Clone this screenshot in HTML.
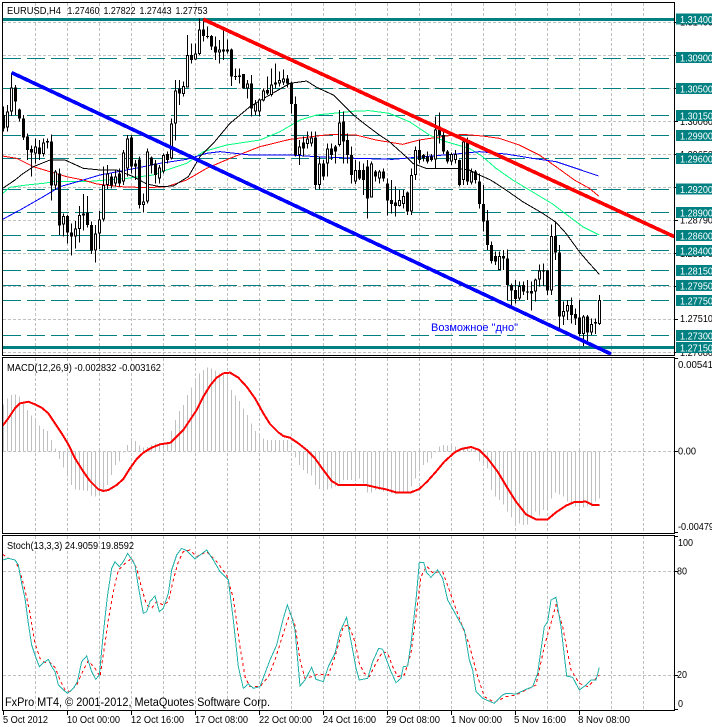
<!DOCTYPE html>
<html><head><meta charset="utf-8"><title>EURUSD,H4</title>
<style>
html,body{margin:0;padding:0;background:#fff;width:712px;height:727px;overflow:hidden}
svg{display:block;shape-rendering:crispEdges;font-family:"Liberation Sans",sans-serif;font-size:10px}
text{fill:#000}
.ax{font-size:10.5px}
.w{fill:#fff}
</style></head><body>
<svg width="712" height="727" viewBox="0 0 712 727" xmlns="http://www.w3.org/2000/svg">
<rect width="712" height="727" fill="#fff"/>
<!-- grid -->
<g fill="none" stroke="#c0c0c0" stroke-width="1" stroke-dasharray="3 2">
<path d="M35.5 3V355M67.5 3V355M99.5 3V355M131.5 3V355M163.5 3V355M195.5 3V355M227.5 3V355M259.5 3V355M291.5 3V355M323.5 3V355M355.5 3V355M387.5 3V355M419.5 3V355M451.5 3V355M483.5 3V355M515.5 3V355M547.5 3V355M579.5 3V355M611.5 3V355M643.5 3V355"/>
<path d="M35.5 358V533M67.5 358V533M99.5 358V533M131.5 358V533M163.5 358V533M195.5 358V533M227.5 358V533M259.5 358V533M291.5 358V533M323.5 358V533M355.5 358V533M387.5 358V533M419.5 358V533M451.5 358V533M483.5 358V533M515.5 358V533M547.5 358V533M579.5 358V533M611.5 358V533M643.5 358V533"/>
<path d="M35.5 536V710M67.5 536V710M99.5 536V710M131.5 536V710M163.5 536V710M195.5 536V710M227.5 536V710M259.5 536V710M291.5 536V710M323.5 536V710M355.5 536V710M387.5 536V710M419.5 536V710M451.5 536V710M483.5 536V710M515.5 536V710M547.5 536V710M579.5 536V710M611.5 536V710M643.5 536V710"/>
<path d="M3 22.5H674M3 55.5H674M3 88.5H674M3 121.5H674M3 154.5H674M3 187.5H674M3 220.5H674M3 253.5H674M3 286.5H674M3 319.5H674M3 352.5H674M3 451.5H674M3 571.5H674M3 675.5H674"/>
</g>
<!-- teal levels -->
<g fill="none" stroke="#008080" stroke-width="1" stroke-dasharray="18 6">
<path d="M3 58.5H674M3 88.5H674M3 115.5H674M3 135.5H674M3 158.5H674M3 189.5H674M3 212.5H674M3 235.5H674M3 250.5H674M3 270.5H674M3 285.5H674M3 300.5H674M3 335.5H674"/>
</g>
<path d="M3 19.5H674M3 347.5H674" stroke="#008080" stroke-width="3" fill="none"/>

<!-- main chart in 3x coordinates -->
<g transform="scale(.333333)" fill="none">
<path stroke="#00ff7f" stroke-width="3" d="M8 580L30 562 80 555 130 550 160 545 260 545 320 540 380 535 460 525 500 510 560 490 610 455 680 435 780 420 840 395 900 360 950 345 1068 333 1108 332 1168 340 1228 365 1288 405 1338 425 1408 445 1448 470 1488 505 1538 540 1588 570 1658 612 1688 635 1748 680 1798 705"/>
<path stroke="#ff0000" stroke-width="3" d="M8 468L50 475 100 500 200 530 250 540 290 552 360 560 440 563 500 560 560 540 620 505 690 475 780 440 870 418 950 408 1000 403 1068 405 1128 420 1208 433 1258 420 1338 408 1388 403 1448 408 1498 415 1558 435 1618 465 1668 500 1723 540 1768 565 1796 588"/>
<path stroke="#0000ff" stroke-width="3" d="M8 658L60 630 130 590 180 560 250 540 300 525 380 510 480 490 560 478 620 460 660 455 750 465 870 465 950 470 1068 475 1178 478 1248 472 1368 462 1438 455 1518 462 1598 475 1668 485 1728 505 1796 528"/>
<path stroke="#000" stroke-width="3" d="M8 565L45 540 70 520 100 500 150 480 195 480 250 505 300 510 350 510 400 530 440 552 480 560 520 558 565 530 600 470 640 430 690 370 750 320 800 290 870 250 920 243 950 262 1000 285 1060 345 1098 375 1138 405 1168 425 1218 470 1238 490 1278 505 1368 505 1408 510 1438 525 1472 540 1518 570 1568 605 1628 640 1668 667 1698 700 1738 755 1768 790 1798 823"/>

<!-- left candles -->
<path stroke="#000" stroke-width="3" d="M10.5 320V395M22.5 315V395M34.5 218V348M46.5 255V345M58.5 325V365M70.5 345V420M82.5 400V480M94.5 437V530M106.5 415V490M118.5 420V480M130.5 415V470M142.5 415V445M154.5 403V602M166.5 510V570M178.5 505V705M190.5 640V710M202.5 645V730M214.5 670V767M226.5 663V745M238.5 618V727M250.5 582V692M262.5 588V683M274.5 665V762M286.5 675V788M298.5 633V747M310.5 500V665M322.5 495V567M334.5 520V565M346.5 510V560M358.5 505V560M370.5 450V555M382.5 405V530M394.5 405V520M406.5 480V540M418.5 470V625M430.5 580V638M442.5 445V610M454.5 470V520M466.5 480V550M478.5 495V550M490.5 460V520M502.5 455V490M514.5 355V478M526.5 240V422M538.5 240V315M550.5 245V290M562.5 105V262M574.5 130V190M586.5 130V180M598.5 55V165M610.5 55V125M622.5 80V115M634.5 105V150M646.5 110V180M658.5 120V190M670.5 85V180M682.5 118V160M694.5 145V258M706.5 205V240M718.5 205V250M730.5 222V265M742.5 240V295M754.5 225V350M766.5 300V345M778.5 295V350M790.5 265V305M802.5 230V285M814.5 205V290M826.5 190V265M838.5 215V260M850.5 208V255M862.5 225V262M874.5 245V340M886.5 290V470M898.5 420V495M910.5 410V470M922.5 395V445M934.5 395V440M946.5 395V568M958.5 470V568M970.5 480V540M982.5 430V530M994.5 430V480M1006.5 435V490M1018.5 330V440M1030.5 335V490M1042.5 400V490M1054.5 440V550M1066.5 480V552"/>
<path stroke="#000" stroke-width="9" d="M10.5 345V385M22.5 335V382M34.5 262V335M46.5 262V305M58.5 328V355M70.5 355V412M82.5 410V450M94.5 447V458M106.5 440V460M118.5 442V462M130.5 428V462M142.5 423V428M154.5 425V557M166.5 515V557M178.5 520V677M190.5 648V673M202.5 648V697M214.5 697V710M226.5 685V710M238.5 645V687M250.5 640V647M262.5 638V675M274.5 675V752M286.5 700V752M298.5 658V700M310.5 555V658M322.5 520V555M334.5 530V557M346.5 530V550M358.5 520V550M370.5 458V545M382.5 415V505M394.5 412V500M406.5 490V500M418.5 478V615M430.5 605V615M442.5 455V605M454.5 472V497M466.5 490V525M478.5 503V535M490.5 465V515M502.5 462V480M514.5 370V475M526.5 272V370M538.5 265V280M550.5 258V282M562.5 165V262M574.5 165V180M586.5 160V178M598.5 88V162M610.5 88V108M622.5 108V111M634.5 108V140M646.5 140V157M658.5 148V157M670.5 148V155M682.5 148V155M694.5 148V230M706.5 228V231M718.5 226V231M730.5 222V265M742.5 250V265M754.5 250V325M766.5 310V335M778.5 298V335M790.5 272V302M802.5 270V280M814.5 253V285M826.5 248V253M838.5 240V250M850.5 235V248M862.5 235V250M874.5 250V312M886.5 312V465M898.5 440V465M910.5 428V445M922.5 415V432M934.5 412V430M946.5 412V555M958.5 490V555M970.5 490V530M982.5 445V490M994.5 445V465M1006.5 440V455M1018.5 368V435M1030.5 365V425M1042.5 420V465M1054.5 465V525M1066.5 510V545"/>
<path stroke="#fff" stroke-width="3" d="M22.5 338V379M34.5 265V332M106.5 443V457M130.5 431V459M166.5 518V554M190.5 651V670M226.5 688V707M238.5 648V684M250.5 643V644M286.5 703V749M298.5 661V697M310.5 558V655M322.5 523V552M346.5 533V547M370.5 461V542M382.5 418V502M430.5 608V612M442.5 458V602M478.5 506V532M490.5 468V512M514.5 373V472M526.5 275V367M550.5 261V279M562.5 168V259M586.5 163V175M598.5 91V159M658.5 151V154M670.5 151V152M682.5 151V152M742.5 253V262M766.5 313V332M778.5 301V332M790.5 275V299M814.5 256V282M826.5 250V251M838.5 243V247M850.5 238V245M898.5 443V462M922.5 418V429M934.5 415V427M958.5 493V552M982.5 448V487M1018.5 371V432M1066.5 513V542"/>

<!-- right candles -->
<g transform="translate(1068 0)">
<path stroke="#000" stroke-width="3" d="M10.5 485V540M22.5 490V585M34.5 480V655M46.5 485V575M58.5 510V545M70.5 510V550M82.5 505V545M94.5 535V647M106.5 540V640M118.5 560V650M130.5 570V620M142.5 570V625M154.5 575V645M166.5 505V645M178.5 440V540M190.5 420V490M202.5 462V485M214.5 455V490M226.5 462V485M238.5 350V505M250.5 337V430M262.5 395V462M274.5 450V490M286.5 458V495M298.5 450V490M310.5 478V560M322.5 420V555M334.5 412V555M346.5 505V553M358.5 510V550M370.5 520V625M382.5 555V695M394.5 630V750M406.5 725V790M418.5 755V795M430.5 755V810M442.5 750V810M454.5 748V900M466.5 850V920M478.5 840V910M490.5 845V900M502.5 845V885M514.5 840V900M526.5 845V932M538.5 835V905M550.5 793V860M562.5 790V858M574.5 810V885M586.5 673V885M598.5 665V780M610.5 735V990M622.5 905V975M634.5 900V960M646.5 892V970M658.5 925V975M670.5 900V1010M682.5 945V1038M694.5 945V1035M706.5 955V1005M718.5 955V1002M730.5 885V975"/>
<path stroke="#000" stroke-width="9" d="M10.5 510V535M22.5 510V540M34.5 500V595M46.5 490V592M58.5 515V530M70.5 515V535M82.5 515V535M94.5 550V602M106.5 600V612M118.5 608V618M130.5 600V618M142.5 588V612M154.5 578V635M166.5 525V635M178.5 450V525M190.5 450V480M202.5 465V475M214.5 470V485M226.5 470V480M238.5 388V478M250.5 380V405M262.5 405V455M274.5 455V485M286.5 462V485M298.5 462V480M310.5 480V555M322.5 425V540M334.5 425V545M346.5 515V548M358.5 515V540M370.5 545V612M382.5 612V665M394.5 662V735M406.5 735V783M418.5 768V785M430.5 768V810M442.5 768V775M454.5 775V855M466.5 855V872M478.5 870V897M490.5 858V895M502.5 855V875M514.5 875V878M526.5 873V880M538.5 838V875M550.5 812V838M562.5 812V814M574.5 812V872M586.5 708V872M598.5 708V758M610.5 758V950M622.5 933V950M634.5 915V935M646.5 915V945M658.5 942V955M670.5 953V1002M682.5 950V1002M694.5 950V998M706.5 972V998M718.5 966V970M730.5 900V972"/>
<path stroke="#fff" stroke-width="3" d="M46.5 493V589M70.5 518V532M130.5 603V615M142.5 591V609M166.5 528V632M178.5 453V522M238.5 391V475M286.5 465V482M298.5 465V477M322.5 428V537M346.5 518V545M430.5 771V807M490.5 861V892M538.5 841V872M550.5 815V835M586.5 711V869M622.5 936V947M634.5 918V932M682.5 953V999M706.5 975V995M730.5 903V969"/>
</g>
<!-- trend lines -->
<path stroke="#ff0000" stroke-width="11" d="M610 58L2023 710"/>
<path stroke="#0000ff" stroke-width="11" d="M35 218L1833 1062"/>
</g>

<!-- MACD -->
<g transform="translate(0 355) scale(.333333)" fill="none">
<path stroke="#c0c0c0" stroke-width="3" d="M10.5 289V148M22.5 289V130M34.5 289V120M46.5 289V118M58.5 289V125M70.5 289V140M82.5 289V165M94.5 289V182M106.5 289V195M118.5 289V212M130.5 289V222M142.5 289V228M154.5 289V255M166.5 289V280M178.5 289V312M190.5 289V338M202.5 289V365M214.5 289V390M226.5 289V403M238.5 289V405M250.5 289V407M262.5 289V408M274.5 289V422M286.5 289V425M298.5 289V420M310.5 289V405M322.5 289V390M334.5 289V360M346.5 289V330M358.5 289V320M370.5 289V292M382.5 289V270M394.5 289V258M406.5 289V258M418.5 289V272M430.5 289V278M442.5 289V276M454.5 289V270M466.5 289V266M478.5 289V264M490.5 289V262M502.5 289V262M514.5 289V228M526.5 289V195M538.5 289V168M550.5 289V150M562.5 289V120M574.5 289V97M586.5 289V70M598.5 289V55M610.5 289V45M622.5 289V37M634.5 289V40M646.5 289V47M658.5 289V55M670.5 289V60M682.5 289V65M694.5 289V105M706.5 289V122M718.5 289V138M730.5 289V160M742.5 289V180M754.5 289V205M766.5 289V228M778.5 289V236M790.5 289V250M802.5 289V255M814.5 289V255M826.5 289V255M838.5 289V255M850.5 289V255M862.5 289V255M874.5 289V270M886.5 289V308M898.5 289V330M910.5 289V345M922.5 289V355M934.5 289V362M946.5 289V390M958.5 289V402M970.5 289V406M982.5 289V404M994.5 289V400M1006.5 289V395M1018.5 289V385M1030.5 289V375M1042.5 289V375M1054.5 289V375M1066.5 289V375"/>
<g transform="translate(1068 0)">
<path stroke="#c0c0c0" stroke-width="3" d="M10.5 289V370M22.5 289V385M34.5 289V412M46.5 289V412M58.5 289V405M70.5 289V405M82.5 289V410M94.5 289V410M106.5 289V415M118.5 289V418M130.5 289V415M142.5 289V412M154.5 289V410M166.5 289V395M178.5 289V370M190.5 289V350M202.5 289V330M214.5 289V322M226.5 289V310M238.5 289V292M250.5 289V275M262.5 289V270M274.5 289V272M286.5 289V272M298.5 289V275M310.5 289V285M322.5 289V280M334.5 289V280M346.5 289V282M358.5 289V285M370.5 289V320M382.5 289V325M394.5 289V340M406.5 289V405M418.5 289V425M430.5 289V435M442.5 289V448M454.5 289V470M466.5 289V488M478.5 289V505M490.5 289V505M502.5 289V510M514.5 289V508M526.5 289V490M538.5 289V470M550.5 289V482M562.5 289V465M574.5 289V460M586.5 289V430M598.5 289V412M610.5 289V418M622.5 289V425M634.5 289V440M646.5 289V450M658.5 289V455M670.5 289V458M682.5 289V458M694.5 289V455M706.5 289V455M718.5 289V440M730.5 289V430"/>
<path stroke="#ff0000" stroke-width="6" d="M0 390L30 390 60 397 90 403 120 412 165 412 190 402 215 378 240 350 265 320 295 293 315 282 345 276 370 285 395 310 425 350 455 400 480 440 510 478 540 493 575 493 600 472 630 452 655 441 690 440 710 450 730 450"/>
</g>
<path stroke="#ff0000" stroke-width="6" d="M8 212L25 190 45 160 60 145 85 140 105 148 125 158 145 175 165 205 185 235 205 268 225 310 250 350 270 378 295 403 310 408 325 405 350 390 370 372 390 340 410 312 430 293 455 278 480 268 512 263 530 245 550 225 570 195 590 165 610 125 630 92 650 68 670 55 690 53 715 68 740 95 765 130 790 175 810 207 835 232 850 243 870 248 895 265 920 285 945 310 970 345 995 378 1015 390 1068 390"/>
</g>

<!-- Stochastic -->
<g transform="translate(0 530) scale(.333333)" fill="none">
<path stroke="#ff0000" stroke-width="3" stroke-dasharray="9 9" d="M8 73L25 85 45 90 60 125 75 180 90 250 105 340 120 385 135 398 150 398 165 412 180 450 195 480 210 485 230 465 250 420 265 392 285 415 300 440 312 360 325 270 340 185 355 120 375 100 395 85 410 115 425 175 440 225 455 235 470 215 490 225 505 215 520 150 535 95 550 65 570 60 590 80 620 65 650 95 680 135 700 205 720 350 735 440 750 470 780 470 805 440 825 390 850 310 870 250 885 285 900 390 915 445 935 440 955 432 985 435 1005 380 1030 290 1045 285 1060 320 1068 350 1078 400 1093 430 1108 440 1128 400 1148 365 1163 370 1178 410 1193 440 1213 435 1233 370 1248 260 1263 140 1280 108 1298 128 1328 125 1353 195 1378 265 1408 345 1433 440 1453 500 1483 517 1518 500 1548 495 1578 480 1608 465 1633 350 1668 225 1688 290 1713 420 1738 460 1763 470 1798 435"/>
<path stroke="#20b2aa" stroke-width="3" d="M8 90L25 85 45 90 55 105 65 160 75 205 85 280 95 345 105 375 118 410 130 398 145 388 155 410 165 425 175 465 190 480 203 490 220 475 232 455 245 395 260 378 275 425 287 448 298 435 310 310 322 200 335 115 345 95 358 110 370 95 383 70 395 88 405 105 415 170 430 250 440 245 450 215 465 198 478 245 490 235 505 190 515 120 530 75 545 55 560 62 585 87 600 75 620 60 640 90 660 125 685 150 700 270 715 410 730 475 745 462 760 475 780 470 795 430 810 390 830 345 850 265 862 225 875 260 885 300 900 468 915 450 935 412 948 448 970 455 985 410 1005 370 1020 305 1040 262 1050 318 1060 370 1068 415 1078 450 1103 445 1118 395 1136 355 1148 358 1158 385 1173 425 1188 458 1203 445 1210 410 1223 408 1233 340 1248 210 1258 97 1271 97 1280 128 1293 142 1313 120 1328 145 1343 210 1368 255 1393 300 1408 390 1418 420 1428 485 1448 505 1483 520 1508 495 1518 490 1548 492 1578 478 1598 470 1613 430 1633 290 1643 275 1653 210 1668 202 1683 290 1700 438 1718 442 1738 480 1758 465 1773 450 1788 450 1798 412"/>
</g>

<!-- frames -->
<g fill="none" stroke="#000" stroke-width="1">
<path d="M2.5 2.5H674.5V355.5H2.5ZM2.5 357.5H674.5V533.5H2.5ZM2.5 535.5H674.5V710.5H2.5Z"/>
<path d="M674 22.5H678M674 55.5H678M674 88.5H678M674 121.5H678M674 154.5H678M674 187.5H678M674 220.5H678M674 253.5H678M674 286.5H678M674 319.5H678M674 352.5H678M674 358.5H678M674 451.5H678M674 532.5H678M674 536.5H678M674 571.5H678M674 675.5H678M674 709.5H678"/>
<path d="M3.5 710V715M67.5 710V715M131.5 710V715M195.5 710V715M259.5 710V715M323.5 710V715M387.5 710V715M451.5 710V715M515.5 710V715M579.5 710V715"/>
</g>

<!-- gray axis labels -->
<g class="ax">
<text x="680" y="25.5" textLength="33" lengthAdjust="spacingAndGlyphs">1.31400</text>
<text x="680" y="59" textLength="33" lengthAdjust="spacingAndGlyphs">1.30900</text>
<text x="680" y="92" textLength="33" lengthAdjust="spacingAndGlyphs">1.30480</text>
<text x="680" y="125" textLength="33" lengthAdjust="spacingAndGlyphs">1.30060</text>
<text x="680" y="158" textLength="33" lengthAdjust="spacingAndGlyphs">1.29650</text>
<text x="680" y="191" textLength="33" lengthAdjust="spacingAndGlyphs">1.29220</text>
<text x="680" y="223.5" textLength="33" lengthAdjust="spacingAndGlyphs">1.28790</text>
<text x="680" y="257" textLength="33" lengthAdjust="spacingAndGlyphs">1.28370</text>
<text x="680" y="322" textLength="33" lengthAdjust="spacingAndGlyphs">1.27510</text>
<text x="680" y="356" textLength="33" lengthAdjust="spacingAndGlyphs">1.27080</text>
</g>

<!-- teal axis labels -->
<g fill="#008080">
<rect x="676" y="13.5" width="36" height="11"/><rect x="676" y="52" width="36" height="11"/><rect x="676" y="83" width="36" height="11"/><rect x="676" y="110" width="36" height="11"/><rect x="676" y="130" width="36" height="11"/><rect x="676" y="153" width="36" height="11"/><rect x="676" y="183.5" width="36" height="11"/><rect x="676" y="207" width="36" height="11"/><rect x="676" y="230" width="36" height="11"/><rect x="676" y="245" width="36" height="11"/><rect x="676" y="265" width="36" height="11"/><rect x="676" y="280" width="36" height="11"/><rect x="676" y="295" width="36" height="11"/><rect x="676" y="330" width="36" height="11"/><rect x="676" y="342" width="36" height="11"/>
</g>
<g class="ax">
<text class="w" x="680" y="23" textLength="33" lengthAdjust="spacingAndGlyphs">1.31400</text>
<text class="w" x="680" y="61.5" textLength="33" lengthAdjust="spacingAndGlyphs">1.30900</text>
<text class="w" x="680" y="92.5" textLength="33" lengthAdjust="spacingAndGlyphs">1.30500</text>
<text class="w" x="680" y="119.5" textLength="33" lengthAdjust="spacingAndGlyphs">1.30150</text>
<text class="w" x="680" y="139.5" textLength="33" lengthAdjust="spacingAndGlyphs">1.29900</text>
<text class="w" x="680" y="162.5" textLength="33" lengthAdjust="spacingAndGlyphs">1.29600</text>
<text class="w" x="680" y="193" textLength="33" lengthAdjust="spacingAndGlyphs">1.29200</text>
<text class="w" x="680" y="216.5" textLength="33" lengthAdjust="spacingAndGlyphs">1.28900</text>
<text class="w" x="680" y="239.5" textLength="33" lengthAdjust="spacingAndGlyphs">1.28600</text>
<text class="w" x="680" y="254.5" textLength="33" lengthAdjust="spacingAndGlyphs">1.28400</text>
<text class="w" x="680" y="274.5" textLength="33" lengthAdjust="spacingAndGlyphs">1.28150</text>
<text class="w" x="680" y="289.5" textLength="33" lengthAdjust="spacingAndGlyphs">1.27950</text>
<text class="w" x="680" y="304.5" textLength="33" lengthAdjust="spacingAndGlyphs">1.27750</text>
<text class="w" x="680" y="339.5" textLength="33" lengthAdjust="spacingAndGlyphs">1.27300</text>
<text class="w" x="680" y="351.5" textLength="33" lengthAdjust="spacingAndGlyphs">1.27150</text>
</g>

<!-- other labels -->
<g class="ax">
<text x="678" y="368" textLength="35" lengthAdjust="spacingAndGlyphs">0.00541</text>
<text x="678" y="454.5" textLength="18" lengthAdjust="spacingAndGlyphs">0.00</text>
<text x="678" y="530" textLength="36" lengthAdjust="spacingAndGlyphs">-0.00479</text>
<text x="678" y="546" textLength="15" lengthAdjust="spacingAndGlyphs">100</text>
<text x="677" y="574.5" textLength="10" lengthAdjust="spacingAndGlyphs">80</text>
<text x="677" y="678" textLength="10" lengthAdjust="spacingAndGlyphs">20</text>
<text x="678" y="707" textLength="5" lengthAdjust="spacingAndGlyphs">0</text>
</g>

<text x="7" y="14" textLength="54" lengthAdjust="spacingAndGlyphs">EURUSD,H4</text>
<text x="67.5" y="14" textLength="32" lengthAdjust="spacingAndGlyphs">1.27460</text>
<text x="103.5" y="14" textLength="32" lengthAdjust="spacingAndGlyphs">1.27822</text>
<text x="139.5" y="14" textLength="32" lengthAdjust="spacingAndGlyphs">1.27443</text>
<text x="175.5" y="14" textLength="32" lengthAdjust="spacingAndGlyphs">1.27753</text>
<text x="7" y="371" textLength="154" lengthAdjust="spacingAndGlyphs">MACD(12,26,9) -0.002832 -0.003162</text>
<text x="7" y="549" textLength="127" lengthAdjust="spacingAndGlyphs">Stoch(13,3,3) 24.9059 19.8592</text>
<text x="5" y="706" style="font-size:11.5px" textLength="265" lengthAdjust="spacingAndGlyphs">FxPro MT4, © 2001-2012, MetaQuotes Software Corp.</text>
<text x="431" y="331" style="font-size:11px;fill:#0000ff" textLength="87" lengthAdjust="spacingAndGlyphs">Возможное "дно"</text>

<g class="ax">
<text x="3" y="723" textLength="45" lengthAdjust="spacingAndGlyphs">5 Oct 2012</text>
<text x="67" y="723" textLength="53" lengthAdjust="spacingAndGlyphs">10 Oct 00:00</text>
<text x="131" y="723" textLength="53" lengthAdjust="spacingAndGlyphs">12 Oct 16:00</text>
<text x="195" y="723" textLength="53" lengthAdjust="spacingAndGlyphs">17 Oct 08:00</text>
<text x="259" y="723" textLength="53" lengthAdjust="spacingAndGlyphs">22 Oct 00:00</text>
<text x="323" y="723" textLength="53" lengthAdjust="spacingAndGlyphs">24 Oct 16:00</text>
<text x="386" y="723" textLength="54" lengthAdjust="spacingAndGlyphs">29 Oct 08:00</text>
<text x="451" y="723" textLength="51" lengthAdjust="spacingAndGlyphs">1 Nov 00:00</text>
<text x="514" y="723" textLength="52" lengthAdjust="spacingAndGlyphs">5 Nov 16:00</text>
<text x="578" y="723" textLength="52" lengthAdjust="spacingAndGlyphs">8 Nov 08:00</text>
</g>
</svg>
</body></html>
